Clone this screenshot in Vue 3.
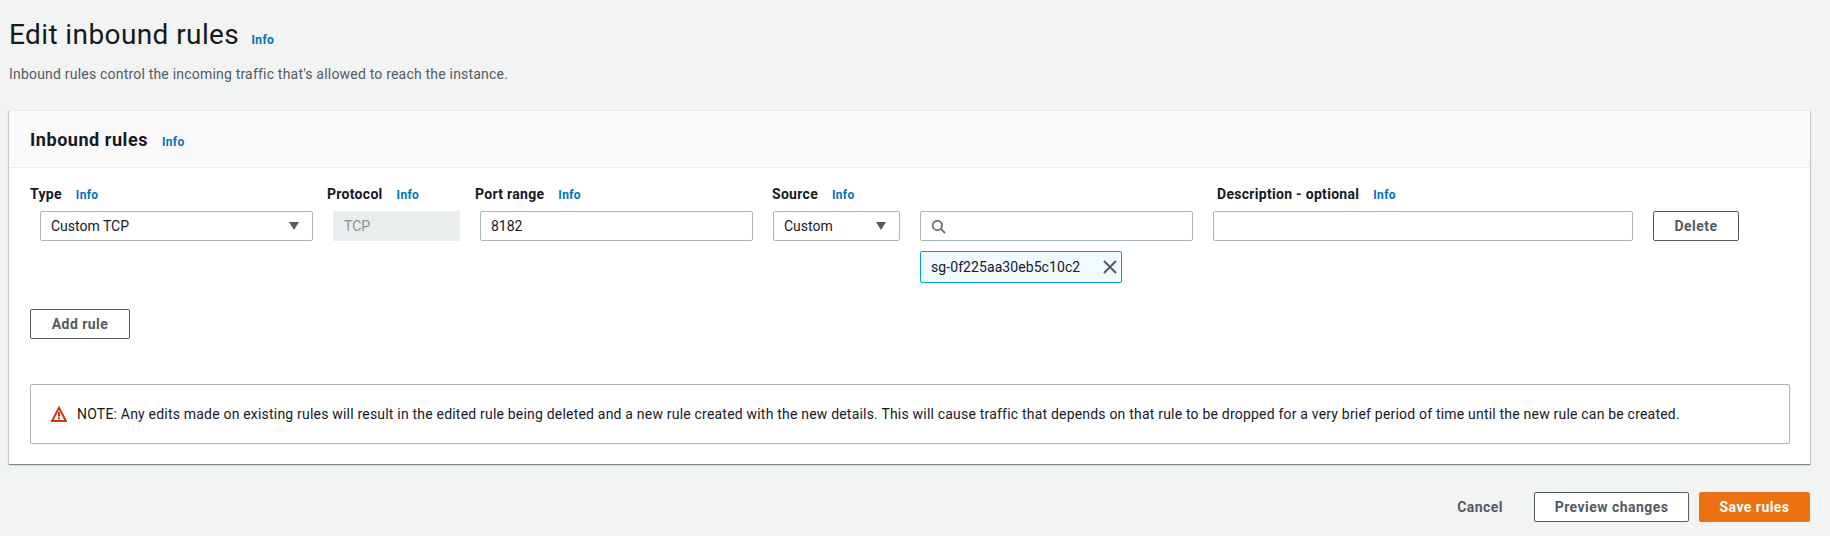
<script setup>
const labels = [
  { title: 'Type', width: '297px' },
  { title: 'Protocol', width: '148px' },
  { title: 'Port range', width: '297px' },
  { title: 'Source', width: '445px' },
  { title: 'Description - optional', width: 'auto' },
];
const note =
  'NOTE: Any edits made on existing rules will result in the edited rule being deleted and a new rule created with the new details. This will cause traffic that depends on that rule to be dropped for a very brief period of time until the new rule can be created.';
</script>

<template>
  <div class="page">
    <div class="page-head">
      <h1>Edit inbound rules <a class="info">Info</a></h1>
      <p>Inbound rules control the incoming traffic that's allowed to reach the instance.</p>
    </div>

    <div class="card">
      <div class="card-head">
        <h2>Inbound rules</h2>
        <a class="info">Info</a>
      </div>
      <div class="card-body">
        <div class="labels">
          <div class="label" v-for="item in labels" :key="item.title" :style="{ width: item.width }">
            <b>{{ item.title }}</b>
            <a class="info">Info</a>
          </div>
        </div>

        <div class="rule">
          <div class="control select type-col">
            <span>Custom TCP</span>
            <i class="caret"></i>
          </div>
          <div class="control disabled proto-col">TCP</div>
          <div class="control port-col">8182</div>
          <div class="control select source-col">
            <span>Custom</span>
            <i class="caret"></i>
          </div>
          <div class="search-col">
            <div class="control search">
              <svg width="15" height="15" viewBox="0 0 16 16" fill="none" stroke="#687078" stroke-width="2">
                <circle cx="6.8" cy="6.8" r="5" />
                <path d="M10.5 10.5 15 15" />
              </svg>
            </div>
            <div class="token">
              <span>sg-0f225aa30eb5c10c2</span>
              <svg width="16" height="16" viewBox="0 0 16 16" fill="none" stroke="#545b64" stroke-width="2">
                <path d="M2 2 14 14M14 2 2 14" />
              </svg>
            </div>
          </div>
          <div class="control desc-col"></div>
          <button class="btn delete">Delete</button>
        </div>

        <button class="btn add">Add rule</button>

        <div class="note">
          <svg width="16" height="16" viewBox="0 0 16 16">
            <path d="M8 1.8 14.9 15H1.1Z" fill="none" stroke="#d13212" stroke-width="2" />
            <path d="M8 6v4.6M8 11.4v2" stroke="#d13212" stroke-width="2" />
          </svg>
          <span>{{ note }}</span>
        </div>
      </div>
    </div>

    <div class="actions">
      <a class="cancel">Cancel</a>
      <button class="btn preview">Preview changes</button>
      <button class="btn save">Save rules</button>
    </div>
  </div>
</template>

<style>
body {
  background: #f2f3f3;
}
</style>

<style scoped>
.page {
  height: 536px;
  box-sizing: border-box;
  padding: 0 20px 0 9px;
  background: #f2f3f3;
  color: #16191f;
  font-family: Roboto, 'Liberation Sans', sans-serif;
  font-size: 14px;
  overflow: hidden;
}
.page-head {
  height: 110px;
}
h1 {
  margin: 0;
  padding-top: 17px;
  font-size: 28px;
  line-height: 36px;
  font-weight: 400;
  letter-spacing: 0.4px;
}
.page-head p {
  margin: 11px 0 0;
  line-height: 20px;
  color: #545b64;
  letter-spacing: 0.2px;
}
.info {
  color: #0073bb;
  font-size: 12px;
  line-height: 1;
  font-weight: 700;
  letter-spacing: 0.3px;
}
h1 .info {
  margin-left: 5px;
}
.card {
  height: 354px;
  background: #fff;
  border-top: 1px solid #eaeded;
  box-shadow: 0 1px 1px 0 rgba(0, 28, 36, 0.3), 1px 1px 1px 0 rgba(0, 28, 36, 0.15), -1px 1px 1px 0 rgba(0, 28, 36, 0.15);
  box-sizing: border-box;
}
.card-head {
  display: flex;
  align-items: baseline;
  gap: 14px;
  height: 57px;
  box-sizing: border-box;
  padding: 18px 21px 0;
  background: #fafafa;
  border-bottom: 1px solid #eaeded;
}
h2 {
  margin: 0;
  font-size: 18px;
  line-height: 22px;
  font-weight: 700;
  letter-spacing: 0.55px;
}
.card-body {
  padding: 0 20px 0 21px;
}
.labels {
  display: flex;
  height: 43px;
  align-items: flex-end;
}
.label {
  display: flex;
  align-items: baseline;
  gap: 14px;
  height: 25px;
}
.label b {
  font-weight: 700;
  letter-spacing: 0.3px;
}
.rule {
  display: flex;
  gap: 20px;
  align-items: flex-start;
  padding-left: 10px;
}
.control {
  display: flex;
  align-items: center;
  justify-content: space-between;
  height: 30px;
  box-sizing: border-box;
  padding: 0 10px;
  background: #fff;
  border: 1px solid #aab7b8;
  border-radius: 2px;
}
.select {
  padding-right: 13px;
}
.type-col,
.port-col,
.search-col {
  width: 273px;
}
.proto-col,
.source-col {
  width: 127px;
}
.desc-col {
  width: 420px;
}
.disabled {
  background: #eaeded;
  border-color: #eaeded;
  color: #879596;
}
.caret {
  width: 0;
  height: 0;
  border-left: 5.5px solid transparent;
  border-right: 5.5px solid transparent;
  border-top: 8px solid #545b64;
}
.search {
  justify-content: flex-start;
}
.token {
  display: inline-flex;
  align-items: center;
  justify-content: space-between;
  gap: 12px;
  width: 202px;
  height: 32px;
  margin-top: 10px;
  box-sizing: border-box;
  padding: 0 3px 0 10px;
  background: #f1faff;
  border: 1px solid #00a1c9;
  border-radius: 2px;
  letter-spacing: 0.08px;
}
.btn {
  height: 30px;
  box-sizing: border-box;
  padding: 0;
  background: #fff;
  border: 1px solid #545b64;
  border-radius: 2px;
  color: #545b64;
  font-family: inherit;
  font-size: 14px;
  font-weight: 700;
  letter-spacing: 0.45px;
}
.delete {
  width: 86px;
}
.add {
  display: block;
  width: 100px;
  margin-top: 26px;
}
.note {
  display: flex;
  align-items: center;
  gap: 10px;
  height: 60px;
  margin-top: 45px;
  box-sizing: border-box;
  padding: 0 20px;
  background: #fff;
  border: 1px solid #aab7b8;
  border-radius: 2px;
  letter-spacing: 0.2px;
}
.actions {
  display: flex;
  justify-content: flex-end;
  align-items: center;
  gap: 10px;
  margin-top: 28px;
}
.cancel {
  margin-right: 21px;
  color: #545b64;
  font-weight: 700;
  letter-spacing: 0.45px;
}
.preview {
  width: 155px;
}
.save {
  width: 111px;
  background: #ec7211;
  border-color: #ec7211;
  color: #fff;
}
</style>
